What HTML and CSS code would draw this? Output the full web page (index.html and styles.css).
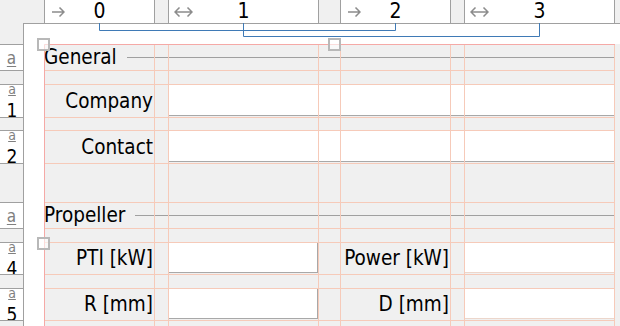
FILE: index.html
```html
<!DOCTYPE html>
<html>
<head>
<meta charset="utf-8">
<title>Grid designer</title>
<link rel="stylesheet" href="styles.css">
</head>
<body>
<div class="designer">
  <div class="corner"></div>
  <div class="col-ruler">
    <div class="hcell"><svg class="arrow" width="13" height="10" viewBox="0 0 13 10"><path d="M0 5H12M7.5 0.5L12 5L7.5 9.5" /></svg><span class="num">0</span></div>
    <div class="hcell gap"></div>
    <div class="hcell wide"><svg class="arrow two" width="19" height="10" viewBox="0 0 19 10"><path d="M1 5H18M5.5 0.5L1 5L5.5 9.5M13.5 0.5L18 5L13.5 9.5" /></svg><span class="num">1</span></div>
    <div class="hcell gap g22"></div>
    <div class="hcell"><svg class="arrow" width="13" height="10" viewBox="0 0 13 10"><path d="M0 5H12M7.5 0.5L12 5L7.5 9.5" /></svg><span class="num">2</span></div>
    <div class="hcell gap"></div>
    <div class="hcell wide last"><svg class="arrow two" width="19" height="10" viewBox="0 0 19 10"><path d="M1 5H18M5.5 0.5L1 5L5.5 9.5M13.5 0.5L18 5L13.5 9.5" /></svg><span class="num">3</span></div>
  </div>
  <div class="row-ruler">
    <div class="rcell on"><span class="ra">a</span></div>
    <div class="rcell"></div>
    <div class="rcell on"><span class="rstack"><span class="ra small">a</span><br>1</span></div>
    <div class="rcell"></div>
    <div class="rcell on"><span class="rstack"><span class="ra small">a</span><br>2</span></div>
    <div class="rcell"></div>
    <div class="rcell on"><span class="ra">a</span></div>
    <div class="rcell"></div>
    <div class="rcell on"><span class="rstack"><span class="ra small">a</span><br>4</span></div>
    <div class="rcell"></div>
    <div class="rcell on"><span class="rstack"><span class="ra small">a</span><br>5</span></div>
    <div class="rcell"></div>
  </div>
  <div class="canvas">
    <div class="form-grid">
      <div class="section row-1"><span>General</span><span class="rule"></span></div>
      <label class="lbl row-3 col-1">Company</label>
      <div class="tb row-3 span-wide"></div>
      <label class="lbl row-5 col-1">Contact</label>
      <div class="tb row-5 span-wide"></div>
      <div class="section row-7"><span>Propeller</span><span class="rule"></span></div>
      <label class="lbl row-9 col-1">PTI [kW]</label>
      <div class="tb short row-9 col-3"></div>
      <label class="lbl row-9 col-5">Power [kW]</label>
      <div class="tb end row-9 col-7"></div>
      <label class="lbl row-11 col-1">R [mm]</label>
      <div class="tb short row-11 col-3"></div>
      <label class="lbl row-11 col-5">D [mm]</label>
      <div class="tb end row-11 col-7"></div>
    </div>
    <svg class="gridlines" width="576" height="282" viewBox="0 0 576 282">
      <g class="soft">
        <path d="M110.5 0V282M124.5 0V282M274.5 0V282M296.5 0V282M406.5 0V282M420.5 0V282M570.5 0V282" />
        <path d="M0 26.5H571M0 40.5H571M0 73.5H571M0 86.5H571M0 119.5H571M0 158.5H571M0 184.5H571M0 198.5H571M0 230.5H571M0 244.5H571M0 276.5H571" />
      </g>
      <path class="hard" d="M0.5 282V0.5H571" />
    </svg>
    <span class="handle h1"></span>
    <span class="handle h2"></span>
    <span class="handle h3"></span>
  </div>
  <svg class="brackets" width="620" height="40" viewBox="0 0 620 40">
    <path d="M99.5 23V30.5H395.5V23" />
    <path d="M243.5 23V36.5H539.5V23" />
  </svg>
</div>
</body>
</html>
```

FILE: styles.css
```css
* {
  box-sizing: border-box;
  margin: 0;
  padding: 0;
}

html, body {
  width: 620px;
  height: 326px;
  overflow: hidden;
}

body {
  background: #f0f0f0;
  font-family: "DejaVu Sans Condensed", "DejaVu Sans", sans-serif;
  font-stretch: semi-condensed;
  font-size: 20.5px;
  color: #000;
}

.designer {
  position: relative;
  display: grid;
  grid-template-columns: 23px 1fr;
  grid-template-rows: 23px 1fr;
  height: 326px;
}

/* column ruler */
.col-ruler {
  display: flex;
  padding-left: 21px;
}

.hcell {
  width: 110px;
  height: 23px;
  border-left: 1px solid #a0a0a0;
  background: #fff;
  display: grid;
  grid-template-columns: 1fr auto 1fr;
  align-items: center;
}

.hcell.wide { width: 150px; }
.hcell.last { width: 151px; border-right: 1px solid #a0a0a0; }
.hcell.gap { width: 14px; background: #f0f0f0; }
.hcell.gap.g22 { width: 22px; }

.arrow {
  justify-self: start;
  margin-left: 7px;
  fill: none;
  stroke: #8c8c8c;
  stroke-width: 1.5;
}

.arrow.two { margin-left: 5px; }

.num {
  font-size: 21px;
  line-height: 23px;
}

/* row ruler */
.row-ruler {
  padding-top: 21px;
  display: grid;
  grid-template-rows: 26px 14px 33px 13px 33px 39px 26px 14px 32px 14px 32px 1fr;
}

.rcell {
  border-top: 1px solid #a0a0a0;
  display: flex;
  flex-direction: column;
  align-items: center;
  justify-content: center;
}

.rcell.on { background: #fff; }

.ra {
  color: #808080;
  font-size: 17px;
  line-height: 18px;
  text-decoration: underline;
  text-underline-offset: 2px;
}

.rstack {
  display: block;
  width: 100%;
  text-align: center;
  font-size: 19px;
  line-height: 18px;
  padding-left: 1px;
}

.ra.small {
  display: inline-block;
  vertical-align: top;
  font-size: 14px;
  line-height: 12px;
  text-underline-offset: 1px;
}

/* canvas */
.canvas {
  position: relative;
  background: #fff;
  border-top: 1px solid #a0a0a0;
  border-left: 1px solid #a0a0a0;
  padding: 20px 0 0 20px;
  display: grid;
  overflow: hidden;
}

.form-grid {
  display: grid;
  grid-template-columns: 110px 14px 150px 22px 110px 14px 150px 1fr;
  grid-template-rows: 26px 14px 33px 13px 33px 39px 26px 14px 32px 14px 32px 1fr;
  background: #f0f0f0;
}

.row-1 { grid-row: 1; }
.row-3 { grid-row: 3; }
.row-5 { grid-row: 5; }
.row-7 { grid-row: 7; }
.row-9 { grid-row: 9; }
.row-11 { grid-row: 11; }
.col-1 { grid-column: 1; }
.col-3 { grid-column: 3; }
.col-5 { grid-column: 5; }
.col-7 { grid-column: 7; }
.span-wide { grid-column: 3 / 8; }

.section {
  grid-column: 1 / 8;
  display: flex;
  align-items: center;
  line-height: 24px;
}

.section .rule {
  flex: 1;
  height: 1px;
  margin-left: 10px;
  background: #a0a0a0;
}

.lbl {
  display: flex;
  align-items: center;
  justify-content: flex-end;
  padding-right: 1px;
  white-space: nowrap;
}

.tb {
  background: #fff;
  margin-bottom: 1px;
  border-bottom: 1px solid #a8a8a8;
}

.tb.short { border-right: 1px solid #a8a8a8; }
.tb.end { border-bottom-color: #ecd6cb; }

.gridlines {
  position: absolute;
  left: 20px;
  top: 20px;
  fill: none;
  pointer-events: none;
}

.gridlines .soft { stroke: #f6cab9; stroke-width: 1; }
.gridlines .hard { stroke: #f5a9a6; stroke-width: 1; }

.handle {
  position: absolute;
  width: 13px;
  height: 13px;
  border: 2px solid #b8b8b8;
  background: rgba(255, 255, 255, 0.6);
}

.h1 { left: 13px; top: 14px; }
.h2 { left: 304px; top: 14px; }
.h3 { left: 13px; top: 213px; }

.brackets {
  position: absolute;
  left: 0;
  top: 0;
  fill: none;
  stroke: #3f7ab6;
  stroke-width: 1;
  pointer-events: none;
}
```
